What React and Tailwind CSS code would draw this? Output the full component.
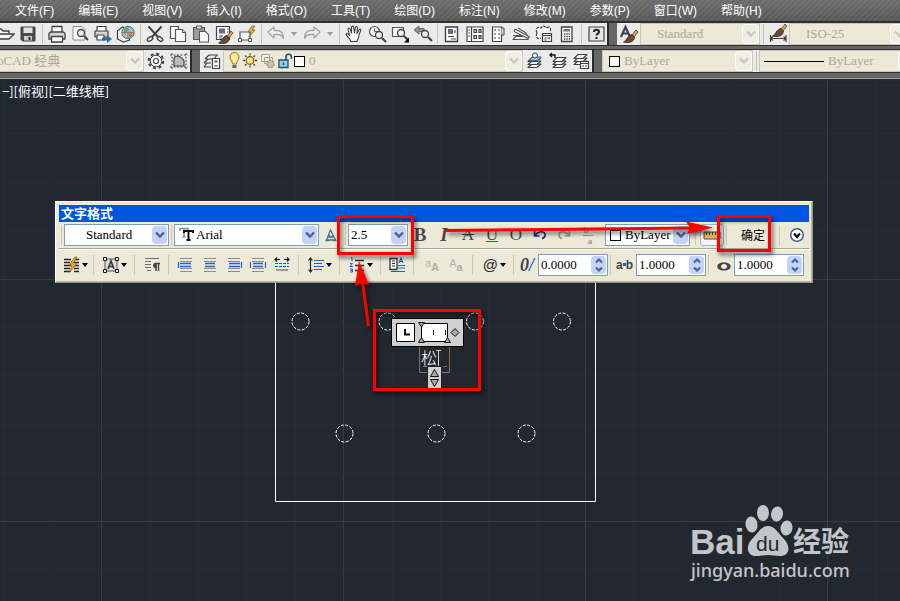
import React from "react";

const INK = "#3f4245";

const MENUS = [
  "文件(F)", "编辑(E)", "视图(V)", "插入(I)", "格式(O)", "工具(T)",
  "绘图(D)", "标注(N)", "修改(M)", "参数(P)", "窗口(W)", "帮助(H)",
];

const Magnifier = ({ x = 11, y = 10 }) => (
  <g>
    <circle cx={x} cy={y} r="3.5" fill="#e8f0f5" stroke={INK} strokeWidth="1.3" />
    <path d={`M${x + 3} ${y + 3}l4 4`} stroke={INK} strokeWidth="2.2" />
  </g>
);

const Brush = ({ x = 0, y = 0 }) => (
  <g transform={`translate(${x} ${y})`}>
    <path d="M13 0l2 2-4 5-2-2z" fill="#d9a34a" stroke="#4a3728" strokeWidth=".7" />
    <path d="M9 4.500l2.500 2.500c0 4-4 6-8 5.500-1 0-2 0-3-.5 3-1 4-7 8.500-7.500z" fill="#6b4a33" stroke="#3c2a1e" strokeWidth=".8" />
  </g>
);

const Stack = ({ x = 0, y = 0, tint = "#f4f4f4" }) => (
  <g transform={`translate(${x} ${y})`} fill={tint} stroke={INK} strokeWidth="1.1" strokeLinejoin="round">
    <path d="M1 12.500h9l4-3.500H5z" />
    <path d="M1 9.500h9l4-3.500H5z" />
    <path d="M1 6.500h9l4-4H5z" />
  </g>
);

const ICONS = {
  open: <path d="M1 15V5h5l2 2h6v3M1 15l4-5h14l-5 5z" fill="#f4f4f4" stroke={INK} strokeWidth="1.4" />,
  save: (
    <g>
      <path d="M3 3h14v14H4.500L3 15.500z" fill="#4c4f52" stroke={INK} strokeWidth="1" />
      <path d="M5.500 3.500h9v5.500h-9z" fill="#dfe3e6" />
      <path d="M6 12h8v4.500H6z" fill="#c9cdd0" />
      <path d="M10.500 13h2v3h-2z" fill="#333" />
    </g>
  ),
  print: (
    <g stroke={INK} strokeWidth="1.3" strokeLinejoin="round">
      <path d="M5 8V2.500h10V8" fill="#fff" />
      <path d="M3.500 8h13L18 9.500V15H2V9.500z" fill="#d5d5d5" />
      <path d="M4.500 12.500h11V18h-11z" fill="#fff" />
    </g>
  ),
  preview: (
    <g>
      <path d="M3 2.500h9l3 3V16H3z" fill="#fafafa" stroke="#8b8b8b" />
      <Magnifier x={11} y={9} />
    </g>
  ),
  publish: (
    <g>
      <g stroke={INK} strokeWidth="1.200" strokeLinejoin="round">
        <path d="M4 7V2.500h9V7" fill="#fff" />
        <path d="M2 7h13v6H2z" fill="#d5d5d5" />
        <path d="M4 11h7v5H4z" fill="#fff" />
      </g>
      <path d="M9 13.500h5V11l5 4-5 4v-2.500H9z" fill="#2b6d9c" />
    </g>
  ),
  globe: (
    <g>
      <path d="M1.500 7l5-4 7 3v10l-6 2-6-3z" fill="#f2f2f2" stroke={INK} strokeWidth="1.200" />
      <circle cx="12" cy="8.500" r="6.200" fill="#8fc1dd" stroke="#5d6f7a" />
      <path d="M8 5q2-2 4-1l-1 4-3 2zM13 10l4-2-1 4-3 2z" fill="#72a24a" />
      <path d="M12 2.500v12M6 8.500h12" stroke="#d9534f" strokeWidth=".9" />
    </g>
  ),
  cut: (
    <g fill="none" stroke={INK} strokeWidth="1.400">
      <path d="M3.500 2.500L13 13M16.500 2.500L7 13" strokeWidth="1.900" />
      <ellipse cx="5" cy="15" rx="3" ry="1.800" transform="rotate(-35 5 15)" />
      <ellipse cx="15" cy="15" rx="3" ry="1.800" transform="rotate(35 15 15)" />
    </g>
  ),
  copy: (
    <g fill="#fbfbfb" stroke="#55585b" strokeWidth="1.200">
      <path d="M2.500 2.500h8v12h-8z" />
      <path d="M7.500 5.500h7l3 3v9h-10z" />
      <path d="M14.500 5.500v3h3" />
    </g>
  ),
  paste: (
    <g stroke="#55585b" strokeWidth="1.100">
      <path d="M2.500 3.500h11v12h-11z" fill="#a39a8e" />
      <path d="M5.500 2h5v3h-5z" fill="#ddd" />
      <path d="M8.500 7.500h6l3 3v7.500h-9z" fill="#fbfbfb" />
    </g>
  ),
  match: (
    <g>
      <path d="M2.500 2.500h13v13h-13z" fill="#fff" stroke={INK} strokeWidth="1.200" />
      <path d="M5 4.500h6v5H5z" fill="#5a6e94" />
      <path d="M13 5h1.500M13 8h1.500M5 12h4M5 14h3" stroke={INK} />
      <Brush x={4} y={7} />
    </g>
  ),
  block: (
    <g>
      <path d="M3 8h10v8H3z" fill="#f5f5f5" stroke="#55585b" strokeWidth="1.200" />
      <path d="M1.500 14.500h3v3h-3zM11.500 14.500h3v3h-3z" fill="#fff" stroke="#55585b" />
      <path d="M15 2l-4 6h3l-2 5 6-7h-3l3-4z" fill="#e8b24a" stroke="#8c6118" strokeWidth=".8" />
    </g>
  ),
  undo: <path d="M2 8l6-5v3.500h4q5.500 1 5.500 8-2-4-5.500-4H8V14z" fill="#f2f2f2" stroke="#a2a5a8" strokeWidth="1.300" strokeLinejoin="round" />,
  redo: <path d="M18 8l-6-5v3.500H8q-5.500 1-5.500 8 2-4 5.500-4h4V14z" fill="#f2f2f2" stroke="#a2a5a8" strokeWidth="1.300" strokeLinejoin="round" />,
  hand: (
    <path d="M7 17.500c-1-3-4.500-5.500-5-7 .5-1.500 2-1 3.500 1L4 5c1-1.500 2-.5 2.500 1l1 3L7.500 3c1-1.500 2-1 2.200.5L10.500 9l1-6c1-1 2-.5 2 .8L13 9.500l2.200-4c1-1 2-.2 1.500 1L15 11c0 3-1.500 4-2 6.500z" fill="#fafafa" stroke={INK} strokeWidth="1.100" strokeLinejoin="round" />
  ),
  zoomRealtime: (
    <g>
      <circle cx="7.500" cy="7.500" r="5" fill="#f4f4f4" stroke="#55585b" strokeWidth="1.200" />
      <path d="M7.500 4.500v3h3" stroke="#55585b" fill="none" />
      <Magnifier x={12} y={11} />
    </g>
  ),
  zoomWindow: (
    <g>
      <path d="M2.500 3.500h11v9h-11z" fill="#f7f7f7" stroke="#55585b" strokeWidth="1.200" />
      <Magnifier x={11} y={9} />
      <path d="M14 18.500h5v-5z" fill="#000" />
    </g>
  ),
  zoomPrevious: (
    <g>
      <path d="M1 6l5-4v2.500h5v3H6V10z" fill="#8b8f93" stroke="#55585b" strokeWidth=".8" />
      <Magnifier x={12} y={10} />
    </g>
  ),
  properties: (
    <g>
      <path d="M3.500 3h12v14.500h-12z" fill="#fff" stroke={INK} strokeWidth="1.400" />
      <path d="M6 5h5v5H6z" fill="#5a6e94" />
      <path d="M13 6v3M6 12.500h6M9 15h5" stroke={INK} />
    </g>
  ),
  designCenter: (
    <g fill="#fff" stroke={INK} strokeWidth="1.200">
      <path d="M2 3h16v14.500H2z" />
      <path d="M6.500 3v14.500" />
      <path d="M9 5.500h2.500v3H9zM14 5.500h2v3h-2zM9 11.500h2.500v3H9zM14 11.500h2v3h-2z" fill="#d5d8da" />
      <path d="M3.500 6h1.500M3.500 9h1.500M3.500 12h1.500" strokeWidth="1" />
    </g>
  ),
  palettes: (
    <g>
      <path d="M4.500 3h9v14.500h-9z" fill="#fff" stroke={INK} strokeWidth="1.200" />
      <path d="M13.500 4h2.500v7h-2.500" fill="#ddd" stroke={INK} />
      <path d="M6 5h2v2H6zM10 5h2v2h-2zM6 9h2v2H6zM10 9h2v2h-2zM6 13h2v2H6zM10 13h2v2h-2z" fill="#9a9da0" />
    </g>
  ),
  sheets: (
    <g fill="#f5f5f5" stroke="#55585b" strokeWidth="1.100" strokeLinejoin="round">
      <path d="M2 15.500l3-3h13l-1 3z" />
      <path d="M2 11.500h9l6 1.500-2-4-8-5" />
      <path d="M5 5.500l12 6.500c2 1 1 2.500-1 2L4 8c-1.500-1-.5-3 1-2.500z" />
    </g>
  ),
  markup: (
    <g fill="#f5f5f5" stroke={INK} strokeWidth="1.200">
      <path d="M3 9c-2-4 1-7 4-5 2-3 4-2 5 0 3-2 6 0 4 4" strokeDasharray="3 1" />
      <path d="M3 9c-2 4 1 7 4 5" strokeDasharray="3 1" />
      <path d="M8.500 9.500h9v8h-9z" />
      <path d="M8.500 11.500h9M10.500 14h2M13.500 14h2.500M10.500 16h2" />
    </g>
  ),
  calculator: (
    <g>
      <path d="M4.500 3h10.500v14.500H4.500z" fill="#fafafa" stroke={INK} strokeWidth="1.300" />
      <path d="M6.500 5h6.500v2.500H6.500z" fill="#777" />
      <path d="M7 10h6M7 12.500h6M7 15h6" stroke={INK} strokeWidth="1.400" strokeDasharray="1.400 1" />
    </g>
  ),
  help: (
    <g>
      <path d="M3 3h15v14H3z" fill="#e4e4e4" stroke={INK} strokeWidth="1.200" />
      <path d="M8 8c0-3 5-3 5 0 0 1.500-2.500 1.700-2.500 3.500M10.500 13v2" fill="none" stroke="#222" strokeWidth="2" />
    </g>
  ),
  textStyle: (
    <g>
      <path d="M2 13L6.500 3 11 13M3.500 9.500h6" fill="none" stroke="#3a4350" strokeWidth="2.200" />
      <Brush x={4} y={6} />
    </g>
  ),
  dimStyle: (
    <g>
      <path d="M2.500 11v7M18 11v7M3 14.500h15M5 12.500l-2.500 2 2.500 2M15.500 12.500l2.500 2-2.500 2" fill="none" stroke={INK} strokeWidth="1.200" />
      <Brush x={4} y={0} />
    </g>
  ),
  gear: (
    <g fill="none" stroke={INK}>
      <circle cx="10" cy="10" r="7.300" strokeWidth="2" strokeDasharray="3 2.730" />
      <circle cx="10" cy="10" r="5.800" fill="#f4f4f4" strokeWidth="1" />
      <circle cx="10" cy="10" r="2.500" fill="#fff" strokeWidth="1.200" />
    </g>
  ),
  workspace: (
    <g>
      <path d="M3 2v16M17 2v16M1 4h18M1 16h18" stroke={INK} strokeDasharray="2 1.500" />
      <path d="M5 15V8q0-3 4-3 5 2 6 5v5z" fill="#b9bdc1" stroke={INK} strokeWidth="1.200" />
    </g>
  ),
  layerProps: (
    <g>
      <path d="M2 16h7M2 12h7M2 12l4-4M4 8h8l3-4H7L3 8M2 16l3-4" fill="none" stroke={INK} strokeWidth="1.200" />
      <path d="M10.500 7.500h7v10h-7z" fill="#fff" stroke={INK} strokeWidth="1.200" />
      <path d="M12.500 9.500h3v2h-3zM12.500 14h3v1.500h-3z" fill="#47607e" />
    </g>
  ),
  layerCurrent: (
    <g>
      <Stack x={2} y={4} tint="#fff" />
      <path d="M4 9.500h8l4-3.500H8z" fill="#9fc9e6" stroke="#2f6ea3" />
      <circle cx="10" cy="4.500" r="2.500" fill="#e8f0f5" stroke={INK} />
    </g>
  ),
  layerPrevious: (
    <g>
      <Stack x={4} y={4} />
      <path d="M2 4h5v3M4 2L2 4l2 2" fill="none" stroke="#111" strokeWidth="1.300" />
    </g>
  ),
  layerStates: (
    <g>
      <Stack x={2} y={1} />
      <path d="M9.500 10.500h8v7h-8z" fill="#fff" stroke={INK} strokeWidth="1.200" />
      <path d="M9.500 12.500h8M11 15h2M14 15h2" stroke={INK} />
    </g>
  ),
};

const Glyph = ({ name, children }) => (
  <svg viewBox="0 0 20 20" className="h-5 w-5 shrink-0" aria-hidden="true">
    {name ? ICONS[name] : children}
  </svg>
);

const Tool = ({ name }) => (
  <button aria-label={name} className="flex h-full w-[23px] shrink-0 items-center justify-center">
    <Glyph name={name} />
  </button>
);

const Caret = ({ color = "#000" }) => (
  <svg viewBox="0 0 6 4" className="h-1 w-[6px] shrink-0" aria-hidden="true">
    <path d="M0 0h6L3 4z" fill={color} />
  </svg>
);

const CaretTool = () => (
  <button aria-label="history" className="flex h-full w-[13px] shrink-0 items-center justify-center">
    <Caret color="#9a9da8" />
  </button>
);

const Rule = () => (
  <span className="flex h-full w-[6px] shrink-0 justify-center py-px">
    <span className="w-px bg-[#c8c4a4]" />
  </span>
);

const Chevron = ({ color }) => (
  <svg viewBox="0 0 10 8" className="h-2 w-[10px]" aria-hidden="true">
    <path d="M1 1.500l4 4 4-4" fill="none" stroke={color} strokeWidth="2.400" />
  </svg>
);

const DimCombo = ({ label, value, className, lead, pad = "pl-0" }) => (
  <div className={`flex h-full items-center border border-[#c9c7b5] bg-[#ece9d8] ${className}`}>
    {lead}
    <select
      aria-label={label}
      disabled
      className={`h-full min-w-0 flex-1 appearance-none bg-transparent font-['Liberation_Serif','Noto_Sans_CJK_SC',serif] text-[13px] leading-4 text-[#aca899] opacity-100 ${pad}`}
    >
      <option>{value}</option>
    </select>
    <span className="flex h-full w-[17px] shrink-0 items-center justify-center rounded-sm border border-white bg-[#f0eee2]">
      <Chevron color="#c9c7ba" />
    </span>
  </div>
);

const Combo = ({ label, value, className, lead, pad = "pl-1" }) => (
  <div className={`flex h-[22px] shrink-0 items-center border border-[#7f9db9] bg-white p-px ${className}`}>
    {lead}
    <select
      aria-label={label}
      className={`h-full min-w-0 flex-1 appearance-none bg-transparent font-['Liberation_Serif','Noto_Sans_CJK_SC',serif] text-[13px] leading-4 text-black ${pad}`}
    >
      <option>{value}</option>
    </select>
    <span className="flex h-full w-[15px] shrink-0 items-center justify-center rounded-sm bg-[#c3d3fd]">
      <Chevron color="#4d6185" />
    </span>
  </div>
);

const Spin = ({ label, value }) => (
  <div className="flex h-[22px] w-[70px] shrink-0 items-center border border-[#7f9db9] bg-white p-px">
    <input
      aria-label={label}
      defaultValue={value}
      className="h-full min-w-0 flex-1 bg-transparent pl-px font-['Liberation_Serif',serif] text-[13px] leading-4 text-black outline-none"
    />
    <span className="flex h-full w-[15px] shrink-0 items-center justify-center rounded-sm bg-[#c3d3fd]">
      <svg viewBox="0 0 8 14" className="h-[14px] w-2" aria-hidden="true">
        <path d="M1 4.500l3-3 3 3M1 9.500l3 3 3-3" fill="none" stroke="#4d6185" strokeWidth="2" />
      </svg>
    </span>
  </div>
);

const Divider = ({ wide }) => (
  <span className={`flex h-5 shrink-0 justify-center ${wide ? "w-[10px]" : "w-[5px]"}`}>
    <span className="w-px bg-[#cbc7b0]" />
  </span>
);

const Cell = ({ label, className = "w-6", children }) => (
  <button aria-label={label} className={`flex h-[22px] shrink-0 items-center justify-center ${className}`}>
    {children}
  </button>
);

const Letter = ({ className, children }) => (
  <span className={`font-['Liberation_Serif',serif] leading-5 text-[#4a4a4a] ${className}`}>{children}</span>
);

const Lines = ({ edges, narrow, align }) => {
  const x = align === "left" ? 4 : 5;
  return (
    <Glyph>
      <path d="M4 3.500h12M4 16.500h12M4 13.500h12M4 6.500h12" stroke="#8b8b8b" />
      <path d={`M${x} 8.500h${narrow ? 10 : 11}M${x} 11.500h${narrow ? 10 : 11}`} stroke="#1464d2" strokeWidth="1.400" />
      {edges.map((e) => (
        <path key={e} d={`M${e} 7v6`} stroke="#1464d2" strokeWidth="1.200" />
      ))}
    </Glyph>
  );
};

const Swatch = ({ className }) => <span className={`h-[11px] w-[11px] shrink-0 border border-black bg-white ${className}`} />;

const FormatPanel = () => (
  <section className="absolute left-[55px] top-[122px] w-[758px] border border-[#9a9788] border-l-[#fff] border-t-[#fff] bg-[#ece9d8] p-[3px] shadow-[inset_-1px_-1px_0_#b8b5a3]">
    <h1 className="h-[17px] bg-[#0054e3] pl-[2px] font-['Noto_Sans_CJK_SC',sans-serif] text-[13px] font-bold leading-[16px] text-white">
      文字格式
    </h1>
    <div className="flex h-[27px] items-center border-b border-[#aca899]">
      <Divider />
      <Combo label="样式" value="Standard" className="w-[105px]" pad="pl-5" />
      <Divider />
      <Combo
        label="字体"
        value="Arial"
        className="w-[145px]"
        pad="pl-px"
        lead={
          <svg viewBox="0 0 16 16" className="ml-[3px] h-4 w-4 shrink-0" aria-hidden="true">
            <path d="M1 4V1.500h8V4M5 2v8M3.500 10h3" fill="none" stroke="#8d8d8d" strokeWidth="1.500" />
            <path d="M5 6V4h9v2M9.500 4v9M7.500 13h4" fill="none" stroke="#111" strokeWidth="2" />
          </svg>
        }
      />
      <Cell label="注释性">
        <Glyph>
          <path d="M9.500 5l-4 10h9zM7 12h6M8 10.500l2 2 2-2M4.500 15.500h3.500M12 15.500h3.500" fill="none" stroke="#3f7096" strokeWidth="1.300" />
        </Glyph>
      </Cell>
      <Divider />
      <Combo label="文字高度" value="2.5" className="w-[60px]" pad="pl-px" />
      <Cell label="粗体"><Letter className="text-[19px] font-bold">B</Letter></Cell>
      <Cell label="斜体"><Letter className="text-[19px] font-bold italic">I</Letter></Cell>
      <Cell label="删除线"><Letter className="text-[17px] line-through">A</Letter></Cell>
      <Cell label="下划线"><Letter className="text-[17px] underline decoration-[#1464d2]">U</Letter></Cell>
      <Cell label="上划线"><Letter className="text-[17px]">O</Letter></Cell>
      <Cell label="放弃">
        <Glyph>
          <path d="M4.500 6v5h5M5 10.500C8 6 14 5.500 15 9c.3 2-1 4-3 4.500" fill="none" stroke="#1a2c8e" strokeWidth="1.600" />
        </Glyph>
      </Cell>
      <Cell label="重做">
        <Glyph>
          <path d="M15.500 6v5h-5M15 10.500C12 6 6 5.500 5 9c-.3 2 1 4 3 4.500" fill="none" stroke="#9c9c94" strokeWidth="1.600" />
        </Glyph>
      </Cell>
      <Cell label="堆叠">
        <span className="flex flex-col font-['Liberation_Serif',serif] text-[9px] font-bold leading-[10px] text-[#9c9a90]">
          <span className="border-b border-[#9c9a90] pr-1">b</span>
          <span className="pl-1">a</span>
        </span>
      </Cell>
      <span className="w-[5px] shrink-0" />
      <Combo label="颜色" value="ByLayer" className="w-[85px]" lead={<Swatch className="ml-[3px]" />} />
      <Divider wide />
      <Cell label="标尺" className="w-6 rounded-[3px] border border-[#98b5e2] bg-[#f7f6f0]">
        <Glyph>
          <path d="M2 7h16v7H2z" fill="#d9b36c" stroke="#6e4f1d" />
          <path d="M4.500 7v3M7.500 7v3M10.500 7v3M13.500 7v3M16 7v3" stroke="#4b3512" />
        </Glyph>
      </Cell>
      <Divider />
      <button className="h-[22px] w-12 shrink-0 font-['Noto_Sans_CJK_SC',sans-serif] text-xs leading-4 text-black">确定</button>
      <Divider />
      <Cell label="选项" className="w-[30px]">
        <Glyph>
          <circle cx="10" cy="10" r="6.300" fill="#fff" stroke="#3f5f85" strokeWidth="1.500" />
          <path d="M7 8.500l3 3.500 3-3.500" fill="none" stroke="#111" strokeWidth="2.200" />
        </Glyph>
      </Cell>
    </div>
    <div className="flex h-[30px] items-center border-t border-white">
      <Cell label="栏数" className="w-8">
        <Glyph>
          <path d="M2 4.500h7M2 7.500h6M2 10.500h7M2 13.500h6M2 16.500h7M12 4.500h5M12 7.500h5M12 10.500h5M12 13.500h5M12 16.500h5" stroke="#222" strokeWidth="1.400" />
          <path d="M13 2l-6 8h3l-2 7 7-9h-4l4-6z" fill="#f0a92c" stroke="#9c6410" strokeWidth=".8" />
        </Glyph>
        <Caret />
      </Cell>
      <Divider />
      <Cell label="对正" className="w-9">
        <Glyph>
          <path d="M4 4h12v12H4z" fill="#dcdcdc" stroke="#555" />
          <path d="M7 14l3-8 3 8M8 11.500h4" fill="none" stroke="#333" strokeWidth="1.600" />
          <path d="M2.500 2.500h3v3h-3zM14.500 2.500h3v3h-3zM2.500 14.500h3v3h-3zM14.500 14.500h3v3h-3z" fill="#fff" stroke="#111" />
        </Glyph>
        <Caret />
      </Cell>
      <Divider />
      <Cell label="段落" className="w-[29px]">
        <Glyph>
          <path d="M3 3.500h14M3 6.500h6M3 9.500h6M3 12.500h6M5 15.500h4" stroke="#6e6e6e" strokeWidth="1.200" />
          <path d="M14 8v8M16.500 8v8M18 8.500h-4" fill="none" stroke="#444" strokeWidth="1.400" />
          <path d="M14 8a2.500 2.500 0 000 5z" fill="#444" stroke="#444" />
        </Glyph>
      </Cell>
      <Divider />
      <div className="flex pl-[3px] pr-[2px]">
        <Cell label="左对齐"><Lines edges={[2.5]} align="left" /></Cell>
        <Cell label="居中"><Lines edges={[]} narrow /></Cell>
        <Cell label="右对齐"><Lines edges={[17.5]} /></Cell>
        <Cell label="对正文字"><Lines edges={[2.5, 17.5]} narrow /></Cell>
        <Cell label="分布">
          <Glyph>
            <path d="M3 4.500h5M12 4.500h5M5 2.500l-2 2 2 2M15 2.500l2 2-2 2" fill="none" stroke="#111" strokeWidth="1.200" />
            <path d="M3 8.500h14M3 11.500h14" stroke="#1464d2" strokeDasharray="3 1" />
            <path d="M4 15h12" stroke="#777" strokeWidth="1.400" />
          </Glyph>
        </Cell>
      </div>
      <Divider />
      <Cell label="行距" className="w-9">
        <Glyph>
          <path d="M4.500 3v14M2.500 5.500l2-2.500 2 2.500M2.500 14.500l2 2.500 2-2.500" fill="none" stroke="#222" strokeWidth="1.200" />
          <path d="M8 5.500h10M8 8.500h8M8 11.500h10M8 14.500h8" stroke="#1464d2" />
        </Glyph>
        <Caret />
      </Cell>
      <Divider />
      <Cell label="编号" className="w-9">
        <Glyph>
          <path d="M4 3l1-.5V6M3 8.500h2.500l-2.500 3h3M3 14h2.500v3H3M3.500 15.500h2" fill="none" stroke="#1464d2" />
          <path d="M8 5.500h9M8 10.500h9M8 15.500h9" stroke="#333" strokeWidth="1.500" />
        </Glyph>
        <Caret />
      </Cell>
      <Divider />
      <Cell label="插入字段" className="w-7">
        <Glyph>
          <path d="M3 3.500h7v11H3z" fill="#fff" stroke="#333" strokeWidth="1.300" />
          <path d="M5 6h3M5 8.500h3M5 11h3" stroke="#333" />
          <path d="M12 8l2-5 2 5M12.500 6.500h3M11 10.500h7M11 13h7M4 16.500h14" fill="none" stroke="#1464d2" strokeWidth="1.200" />
        </Glyph>
      </Cell>
      <Divider />
      <div className="flex pl-1 pr-[2px]">
        <Cell label="大写">
          <span className="flex font-['Liberation_Sans',sans-serif] text-[11px] leading-4 text-[#b4b1a3]">
            <span className="pb-1">a</span><span className="pt-1 font-bold">A</span>
          </span>
        </Cell>
        <Cell label="小写">
          <span className="flex font-['Liberation_Sans',sans-serif] text-[11px] leading-4 text-[#b4b1a3]">
            <span className="pb-1">A</span><span className="pt-1 font-bold">a</span>
          </span>
        </Cell>
      </div>
      <Divider />
      <Cell label="符号" className="w-9">
        <span className="w-5 text-center font-['Liberation_Sans',sans-serif] text-[15px] font-bold italic leading-5 text-[#333]">@</span>
        <Caret />
      </Cell>
      <Divider />
      <span className="w-[22px] shrink-0 text-center font-['Liberation_Serif',serif] text-lg font-bold italic leading-5 text-[#444]">
        0<span className="text-[#1464d2]">/</span>
      </span>
      <Spin label="倾斜角度" value="0.0000" />
      <Divider />
      <span className="flex w-[23px] shrink-0 items-center justify-center font-['Liberation_Sans',sans-serif] text-xs font-bold leading-4 text-[#444]">
        a<span className="h-[3px] w-[3px] bg-[#1464d2]" />b
      </span>
      <Spin label="追踪" value="1.0000" />
      <Divider />
      <span className="flex w-[23px] shrink-0 justify-center">
        <Glyph>
          <path fillRule="evenodd" d="M11 7.500c9 0 9 8 0 8s-9-8 0-8zm0 1.500c-4 0-4 5 0 5s4-5 0-5z" fill="#444" />
        </Glyph>
      </span>
      <Spin label="宽度因子" value="1.0000" />
    </div>
  </section>
);

const LINES = Array.from({ length: 60 }, (_, i) => i);
const isMajorColumn = (i) => i % 5 === 2;
const isMajorRow = (i) => i % 5 === 4;
const order = (major) => [...LINES].sort((a, b) => major(a) - major(b));

const Drawing = () => (
  <svg className="absolute inset-0 h-full w-full" aria-hidden="true">
    {order(isMajorColumn).map((i) => (
      <path key={`v${i}`} d={`M${Math.round(4.3 + i * 48.4) + 0.5} 0v3000`} stroke={isMajorColumn(i) ? "#353b49" : "#252b37"} />
    ))}
    {order(isMajorRow).map((i) => (
      <path key={`h${i}`} d={`M0 ${Math.round(6 + i * 48.4) + 0.5}h4000`} stroke={isMajorRow(i) ? "#353b49" : "#252b37"} />
    ))}
    <path d="M275.500 180v242.500h320V180" fill="none" stroke="#fff" />
    {[[300.5, 242.5], [387.5, 242.5], [475, 242.5], [562, 242.5], [344.5, 354.5], [436.5, 354.5], [526.5, 354.5]].map(([x, y]) => (
      <circle key={`${x}-${y}`} cx={x} cy={y} r="8.500" fill="none" stroke="#fff" strokeDasharray="3 1.500" />
    ))}
    <path d="M419.500 266v27.500h30V266" fill="none" stroke="#8a735c" />
    <path d="M423 287.500h24" stroke="#8a735c" strokeDasharray="5 2" />
    <path d="M436 271.500h5M438.500 271v16" stroke="#d8cdb5" />
    <path d="M391.500 239.500h72v28h-72z" fill="#d0d0d0" stroke="#000" />
    <path d="M396.500 244.500h18v18h-18z" fill="#fff" stroke="#000" />
    <path d="M405 250v5.500h5" fill="none" stroke="#000" strokeWidth="1.800" />
    <path d="M421.500 244.500h26v18h-26z" fill="#fff" stroke="#000" />
    <path d="M433.500 251v5M445.500 251v5" stroke="#000" />
    <path d="M418.500 243.500h6l-3 4.500zM418.500 263.500h6l-3-5zM444.500 263.500h6l-3-5zM451 253.500l4-4 4 4-4 4z" fill="#a9a9a9" stroke="#111" />
    <path d="M427.500 287.500h14v23h-14z" fill="#d0d0d0" stroke="#222" />
    <path d="M430.500 297.500h8l-4-7zM430.500 300.500h8l-4 7z" fill="#a9a9a9" stroke="#111" />
    <text x="421" y="285" fill="#fff" className="font-['Noto_Sans_CJK_SC',sans-serif] text-base font-light">松</text>
  </svg>
);

const Watermark = () => (
  <svg viewBox="0 0 170 80" className="absolute left-[688px] top-[422px] h-20 w-[170px]" role="img" aria-label="Baidu 经验">
    <g fill="#c3c5c8">
      <text x="2" y="53" className="font-['Liberation_Sans',sans-serif] text-[35px] font-bold">Bai</text>
      <ellipse cx="63.500" cy="23.500" rx="6" ry="8" transform="rotate(-8 63.500 23.500)" />
      <ellipse cx="75" cy="12" rx="6" ry="8" />
      <ellipse cx="89" cy="13" rx="6" ry="7.500" transform="rotate(8 89 13)" />
      <ellipse cx="98.500" cy="27" rx="6" ry="7.500" transform="rotate(8 98.500 27)" />
      <path d="M80 25c7 0 10 7 15 12 9 9 6 18-3 18-4 0-8-1-12-1s-7 1-12 1c-9 0-11-10-4-17 6-6 9-13 16-13z" />
      <text x="105" y="51" className="font-['Noto_Sans_CJK_SC',sans-serif] text-[28px] font-bold">经验</text>
      <text x="3" y="76" className="font-['Noto_Sans',sans-serif] text-lg font-medium">jingyan.baidu.com</text>
    </g>
    <text x="68" y="50" fill="#222830" className="font-['Liberation_Sans',sans-serif] text-[21px]">du</text>
  </svg>
);

const Annotations = () => (
  <svg className="pointer-events-none absolute inset-0 h-full w-full drop-shadow-[2px_3px_2px_rgba(0,0,0,0.6)]" aria-hidden="true">
    <g fill="none" stroke="#fe0000" strokeWidth="3">
      <path d="M338.500 137.500h74v37h-74zM718.500 137.500h51v34h-51zM374.500 231.500h105v79h-105z" />
      <path d="M446 151.500L690 149M368.500 247l-6-44" />
    </g>
    <path d="M713 148.500l-27-6 4 6-3 6.500zM359 182l-4 25 7-3 7 2z" fill="#fe0000" />
  </svg>
);

const Grip = () => <span className="w-[10px] shrink-0 border-l-2 border-[#2b2b2b] bg-[#666]" />;

export default function App() {
  return (
    <div className="flex min-h-screen flex-col overflow-hidden bg-[#222830] font-['Liberation_Sans','Noto_Sans_CJK_SC',sans-serif]">
      <nav className="flex h-[23px] items-center gap-6 whitespace-nowrap border-b-2 border-[#303030] bg-[repeating-linear-gradient(135deg,#ffffff08_0_2px,#00000008_2px_4px),linear-gradient(#707070,#5a5a5a)] pl-[15px] text-xs leading-4 text-white">
        {MENUS.map((m) => (
          <button key={m} className="shrink-0">{m}</button>
        ))}
      </nav>

      <div className="flex h-[23px] border-b border-[#303030] bg-[#ebebeb]">
        <div className="-ml-[7px] flex shrink-0 items-center">
          <Tool name="open" /><Tool name="save" /><Rule />
          <Tool name="print" /><Tool name="preview" /><Tool name="publish" /><Tool name="globe" /><Rule />
          <Tool name="cut" /><Tool name="copy" /><Tool name="paste" /><Tool name="match" /><Tool name="block" /><Rule />
          <Tool name="undo" /><CaretTool /><Tool name="redo" /><CaretTool /><Rule />
          <Tool name="hand" /><Tool name="zoomRealtime" /><Tool name="zoomWindow" /><Tool name="zoomPrevious" /><Rule />
          <Tool name="properties" /><Tool name="designCenter" /><Tool name="palettes" /><Tool name="sheets" /><Tool name="markup" /><Tool name="calculator" /><Rule />
          <Tool name="help" />
        </div>
        <Grip />
        <Tool name="textStyle" />
        <DimCombo label="文字样式" value="Standard" className="w-[120px] shrink-0" pad="pl-4" />
        <Rule />
        <Tool name="dimStyle" />
        <DimCombo label="标注样式" value="ISO-25" className="-mr-2 flex-1" pad="pl-4" />
      </div>

      <div className="h-[3px] bg-[#666]" />

      <div className="flex h-[24px] border-y border-[#303030] bg-[#ebebeb]">
        <DimCombo label="工作空间" value="oCAD 经典" className="-ml-1 w-[148px] shrink-0" />
        <Tool name="gear" /><Tool name="workspace" />
        <Grip />
        <Tool name="layerProps" />
        <DimCombo
          label="图层"
          value="0"
          className="w-[300px] shrink-0"
          pad="pl-1"
          lead={
            <span className="flex shrink-0 items-center pl-[2px]">
              <svg viewBox="0 0 68 20" className="h-5 w-[68px]" aria-hidden="true">
                <path d="M6.500 13c0-3-2.500-4-2.500-7a4.500 4.500 0 019 0c0 3-2.500 4-2.500 7z" fill="#ffe98a" stroke="#8c7a3a" />
                <path d="M6.500 14h4v3h-4z" fill="#666" />
                <circle cx="24" cy="9.500" r="3.800" fill="#ffe27a" stroke="#6b5b2a" strokeWidth="1.200" />
                <path d="M24 2.500v2M24 14.500v2M17 9.500h2M29 9.500h2M19 4.500l1.500 1.500M27.500 13l1.500 1.500M29 4.500L27.500 6M20.500 13L19 14.500" stroke="#4d4630" strokeWidth="1.300" />
                <path d="M35.500 3.500h8v7h-8zM38.500 6.500h8v6h-8z" fill="#f0eee4" stroke="#a5a294" />
                <circle cx="44.500" cy="13" r="3.500" fill="#c5c3b8" stroke="#98968a" strokeDasharray="2 1" strokeWidth="1.500" />
                <path d="M53 9h9v7.500h-9z" fill="#8fd0f0" stroke="#1f4f6b" strokeWidth="1.300" />
                <path d="M60 9V6a2.700 2.700 0 015.400 0v2" fill="none" stroke="#1f4f6b" strokeWidth="1.600" />
                <path d="M57.500 11.500v2.500" stroke="#1f4f6b" strokeWidth="1.500" />
              </svg>
              <Swatch />
            </span>
          }
        />
        <Tool name="layerCurrent" /><Tool name="layerPrevious" /><Tool name="layerStates" />
        <Grip />
        <DimCombo label="颜色控制" value="ByLayer" className="w-[151px] shrink-0" pad="pl-1" lead={<Swatch className="ml-[6px]" />} />
        <Rule />
        <DimCombo
          label="线型控制"
          value="ByLayer"
          className="-mr-4 flex-1"
          pad="pl-1"
          lead={<span className="ml-1 h-px w-[60px] shrink-0 bg-black" />}
        />
      </div>

      <div className="h-[6px] border-b border-[#a49e8a] bg-[#666]" />

      <main className="relative flex-1 overflow-hidden">
        <Drawing />
        <p className="relative pl-[2px] pt-1 font-['Noto_Sans_CJK_SC',sans-serif] text-[13px] leading-4 text-white">−][俯视][二维线框]</p>
        <FormatPanel />
        <Watermark />
        <Annotations />
      </main>
    </div>
  );
}
